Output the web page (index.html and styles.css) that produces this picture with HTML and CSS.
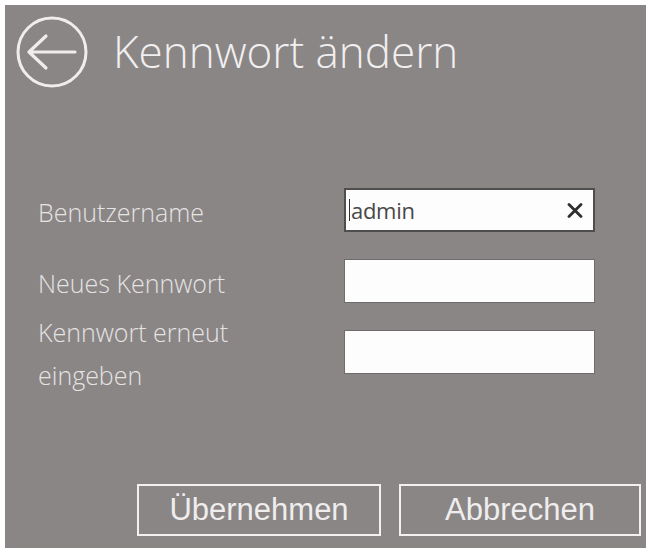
FILE: index.html
```html
<!DOCTYPE html>
<html lang="de">
<head>
<meta charset="utf-8">
<title>Kennwort ändern</title>
<link rel="stylesheet" href="styles.css">
</head>
<body>
<div class="panel">
  <div class="header">
    <svg class="back" width="74" height="74" viewBox="0 0 74 74" aria-label="Zurück">
      <circle cx="37" cy="37" r="34" fill="none" stroke="#efeded" stroke-width="3"/>
      <path d="M14 37 H60 M14 37 L31 21 M14 37 L31 53" fill="none" stroke="#efeded" stroke-width="3.2" stroke-linecap="round" stroke-linejoin="round"/>
    </svg>
    <h1 class="title">Kennwort ändern</h1>
  </div>

  <div class="form">
    <div class="label">Benutzername</div>
    <div class="field field-active">
      <span class="caret"></span><span class="value">admin</span>
      <svg class="clear" width="16" height="15" viewBox="0 0 16 15">
        <path d="M2 1.5 L14 13.5 M14 1.5 L2 13.5" stroke="#2e2e2e" stroke-width="2.8" stroke-linecap="round"/>
      </svg>
    </div>

    <div class="label">Neues Kennwort</div>
    <div class="field"></div>

    <div class="label">Kennwort erneut eingeben</div>
    <div class="field"></div>
  </div>

  <div class="actions">
    <button class="btn btn-apply">Übernehmen</button>
    <button class="btn btn-cancel">Abbrechen</button>
  </div>
</div>
</body>
</html>
```

FILE: styles.css
```css
html, body {
  margin: 0;
  background: #ffffff;
}

.panel {
  box-sizing: border-box;
  margin: 5px 8px 0 5px;
  height: 543px;
  background: #8a8686;
  padding: 10px 5px 12px 10px;
  display: flex;
  flex-direction: column;
}

.header {
  display: flex;
  align-items: center;
  gap: 24px;
  height: 74px;
}

.back {
  flex: none;
  display: block;
}

.title {
  margin: 0;
  font-family: "Open Sans", "DejaVu Sans", sans-serif;
  font-weight: 300;
  font-size: 44px;
  color: #f1efef;
  line-height: 1;
  position: relative;
  top: -1px;
}

.form {
  margin: 99px 0 0 23px;
  display: grid;
  grid-template-columns: 306px 251px;
  grid-auto-rows: 44px;
  row-gap: 27px;
  align-items: center;
}

.label {
  max-width: 235px;
  font-family: "Open Sans", "DejaVu Sans", sans-serif;
  font-weight: 300;
  font-size: 25px;
  line-height: 43px;
  color: #e6e3e3;
  position: relative;
  top: 2px;
}

.field {
  box-sizing: border-box;
  height: 44px;
  background: #fdfdfd;
  border: 1px solid #6e6c6c;
  display: flex;
  align-items: center;
  padding: 0 10px 0 3px;
}

.field-active {
  border: 2px solid #4f4d4d;
}

.caret {
  width: 1px;
  height: 22px;
  background: #333;
  margin-right: 1px;
}

.value {
  flex: 1;
  font-family: "Open Sans", "DejaVu Sans", sans-serif;
  font-size: 22px;
  color: #4a4848;
  letter-spacing: -0.3px;
}

.clear {
  display: block;
}

.actions {
  margin-top: auto;
  display: flex;
  justify-content: flex-end;
  gap: 18px;
}

.btn {
  box-sizing: border-box;
  height: 52px;
  background: transparent;
  border: 2px solid #f2f0f0;
  font-family: "Liberation Sans", Arial, sans-serif;
  font-size: 31px;
  color: #efeded;
  padding: 0;
  cursor: pointer;
}

.btn-apply {
  width: 244px;
}

.btn-cancel {
  width: 242px;
}
```
